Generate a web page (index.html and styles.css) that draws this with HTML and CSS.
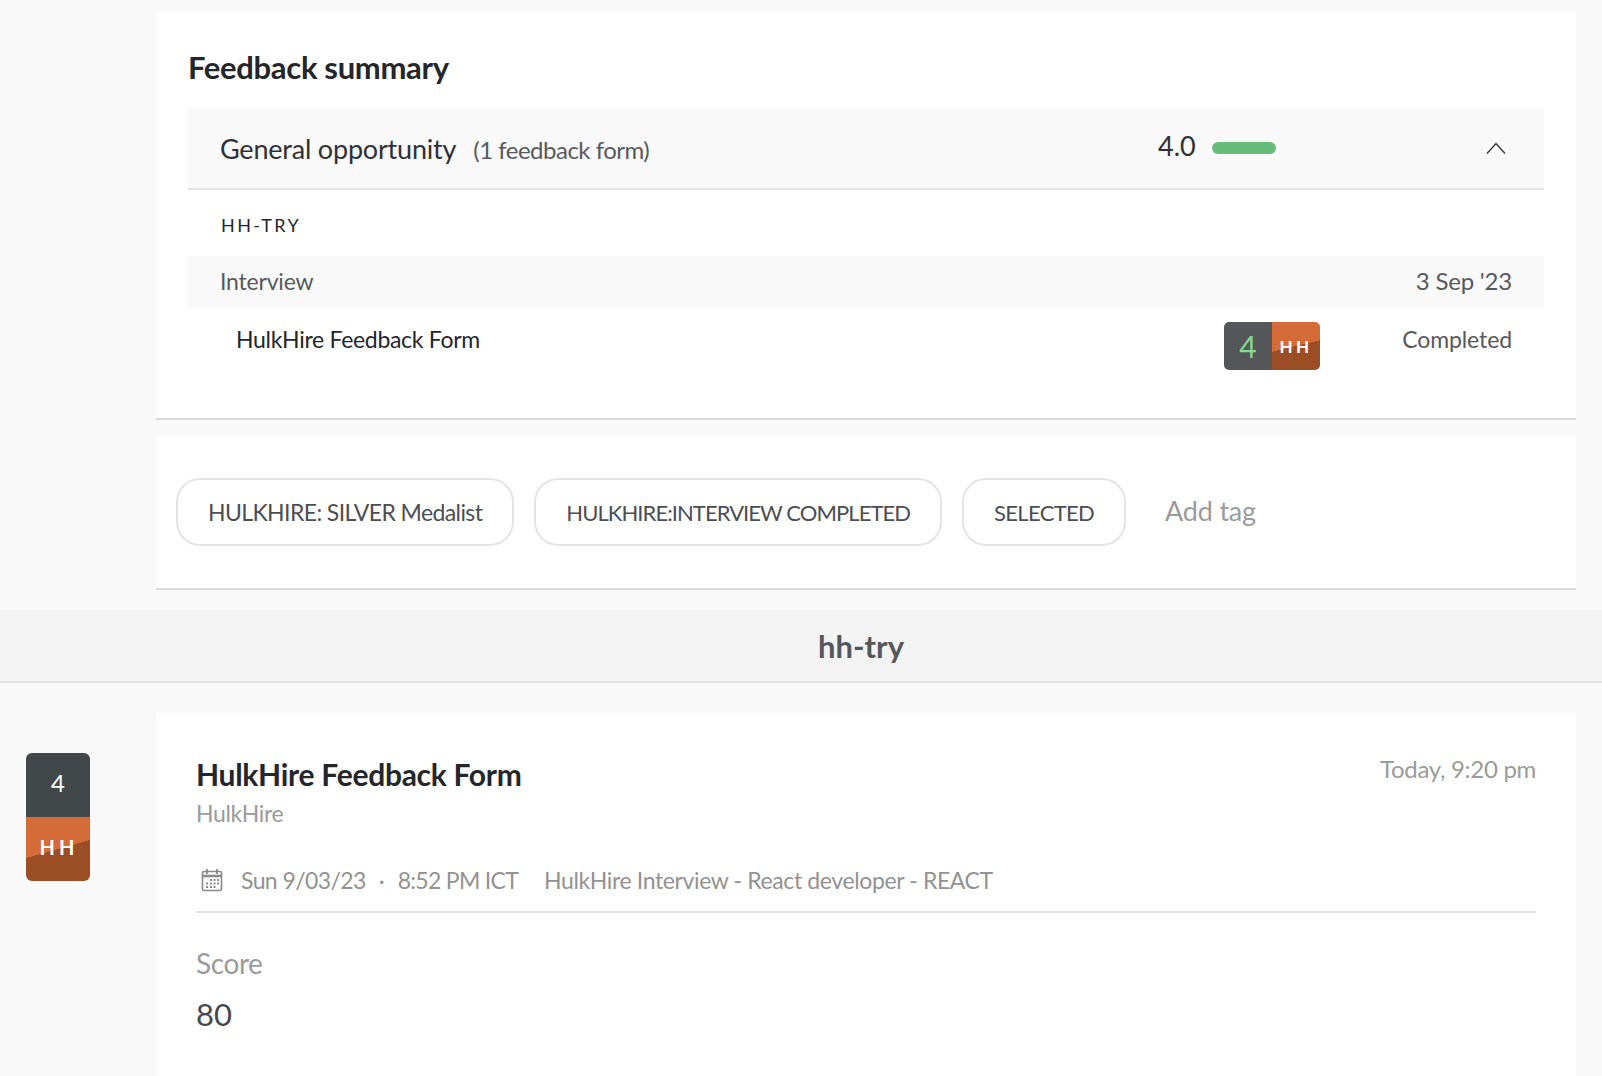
FILE: index.html
```html
<!DOCTYPE html>
<html lang="en">
<head>
<meta charset="utf-8">
<title>Feedback summary</title>
<link rel="stylesheet" href="styles.css">
</head>
<body>
<div class="top">
  <section class="card summary">
    <h2 class="summary-title">Feedback summary</h2>
    <div class="group-head">
      <div class="group-name">General opportunity<span class="group-count">(1 feedback form)</span></div>
      <div class="group-score">4.0</div>
      <div class="bar"></div>
      <svg class="chevron" width="20" height="12" viewBox="0 0 20 12"><path d="M1 11.5 10 1.5 19 11.5" fill="none" stroke="#333" stroke-width="1.3"/></svg>
    </div>
    <div class="posting">HH-TRY</div>
    <div class="stage"><span class="stage-name">Interview</span><span class="stage-date">3 Sep '23</span></div>
    <div class="form-row">
      <span class="form-name">HulkHire Feedback Form</span>
      <div class="badge">
        <span class="badge-score">4</span>
        <span class="badge-who">HH</span>
      </div>
      <span class="form-status">Completed</span>
    </div>
  </section>
  <section class="card tags">
    <span class="tag">HULKHIRE: SILVER Medalist</span>
    <span class="tag tag-caps">HULKHIRE:INTERVIEW COMPLETED</span>
    <span class="tag tag-short">SELECTED</span>
    <span class="add-tag">Add tag</span>
  </section>
</div>
<div class="band"><span>hh-try</span></div>
<div class="feed">
  <div class="side-badge">
    <span class="side-score">4</span>
    <span class="side-who">HH</span>
  </div>
  <section class="card detail">
    <div class="detail-head">
      <div>
        <h3 class="detail-title">HulkHire Feedback Form</h3>
        <div class="detail-author">HulkHire</div>
      </div>
      <div class="detail-time">Today, 9:20 pm</div>
    </div>
    <div class="meta">
      <svg class="cal" width="22" height="24" viewBox="0 0 22 24" fill="none">
        <rect x="1.500" y="3.500" width="19" height="19" rx="1.500" stroke="#8a8a8a" stroke-width="1.600"/>
        <path d="M1.500 8h19" stroke="#8a8a8a" stroke-width="2.600"/>
        <path d="M6 1v5M16 1v5" stroke="#8a8a8a" stroke-width="1.800"/>
        <path d="M9 11h2v2H9zM12.500 11h2v2h-2zM16 11h2v2h-2zM5 14.500h2v2H5zM9 14.500h2v2H9zM12.500 14.500h2v2h-2zM16 14.500h2v2h-2zM5 18h2v2H5zM9 18h2v2H9zM12.500 18h2v2h-2z" fill="#8a8a8a"/>
      </svg>
      <span class="meta-date">Sun 9/03/23</span>
      <span class="meta-dot">·</span>
      <span class="meta-clock">8:52 PM ICT</span>
      <span class="meta-name">HulkHire Interview - React developer - REACT</span>
    </div>
    <div class="score-label">Score</div>
    <div class="score-value">80</div>
  </section>
</div>
</body>
</html>
```
FILE: styles.css
```css
* { box-sizing: border-box; }
html, body { margin: 0; padding: 0; }
body {
  width: 1602px;
  height: 1076px;
  overflow: hidden;
  background: #f9f9f9;
  font-family: "Lato", "Noto Sans", sans-serif;
  color: #333;
}
.card { background: #fff; }
.top {
  margin-left: 156px;
  width: 1420px;
  padding-top: 12px;
  display: flex;
  flex-direction: column;
  gap: 16px;
}
.summary {
  height: 408px;
  padding: 33px 32px 0 32px;
  border-bottom: 2px solid #d9d9d9;
}
.summary-title {
  margin: 0;
  height: 63px;
  font-size: 31px;
  line-height: 44px;
  font-weight: 700;
  letter-spacing: -0.32px;
  color: #24262a;
}
.group-head {
  height: 82px;
  background: #f9f9f9;
  border-bottom: 2px solid #e2e2e2;
  display: flex;
  align-items: center;
  padding: 0 38px 0 32px;
}
.group-name { font-size: 27px; letter-spacing: -0.2px; color: #2f3136; width: 938px; }
.group-count { font-size: 24px; letter-spacing: -0.5px; color: #57595d; margin-left: 17px; }
.group-score { font-size: 27px; color: #2f3136; width: 54px; margin-top: -6px; }
.bar { width: 64px; height: 12px; border-radius: 6px; background: #66bd7b; }
.chevron { margin-left: auto; }
.posting {
  height: 66px;
  padding: 24px 0 0 33px;
  font-size: 18px;
  line-height: 22px;
  letter-spacing: 2.4px;
  color: #24262a;
}
.stage {
  height: 52px;
  background: #f9f9f9;
  display: flex;
  align-items: center;
  justify-content: space-between;
  padding: 0 32px 3px;
  color: #57595d;
}
.stage-name { font-size: 23px; letter-spacing: -0.2px; }
.stage-date { font-size: 24px; letter-spacing: -0.2px; }
.form-row {
  display: flex;
  align-items: flex-start;
  padding: 14px 32px 0 48px;
}
.form-name { font-size: 23px; letter-spacing: -0.3px; line-height: 34px; color: #24262a; width: 988px; }
.badge {
  width: 96px;
  height: 48px;
  border-radius: 5px;
  overflow: hidden;
  display: flex;
}
.badge-score {
  width: 48px;
  background: #54565a;
  color: #86d68c;
  font-size: 30px;
  line-height: 48px;
  text-align: center;
}
.badge-who {
  width: 48px;
  background: linear-gradient(166.500deg, #d56b36 50%, #9b4e26 50%);
  color: #fff;
  font-size: 17px;
  font-weight: 700;
  letter-spacing: 3.5px;
  line-height: 50px;
  text-align: center;
}
.form-status {
  margin-left: auto;
  font-size: 23px;
  letter-spacing: -0.1px;
  line-height: 34px;
  color: #57595d;
}
.tags {
  height: 154px;
  border-bottom: 2px solid #d9d9d9;
  display: flex;
  align-items: flex-start;
  gap: 20px;
  padding: 42px 0 0 20px;
}
.tag {
  height: 68px;
  padding: 0 30px;
  border: 2px solid #e4e4e4;
  border-radius: 24px;
  display: flex;
  align-items: center;
  font-size: 23px;
  letter-spacing: -0.6px;
  color: #4c4e52;
  white-space: nowrap;
}
.tag-caps { font-size: 22px; letter-spacing: -0.93px; }
.tag-short { font-size: 22px; letter-spacing: -0.68px; }
.add-tag {
  margin-left: 19px;
  font-size: 27px;
  letter-spacing: -0.2px;
  line-height: 66px;
  color: #9b9b9b;
}
.band {
  margin-top: 20px;
  height: 73px;
  background: #f3f3f3;
  border-bottom: 2px solid #e2e2e2;
  padding-left: 120px;
  display: flex;
  align-items: center;
  justify-content: center;
  font-size: 31px;
  font-weight: 700;
  color: #55575b;
}
.feed {
  display: flex;
  align-items: flex-start;
  padding: 30px 26px 0 26px;
}
.side-badge {
  width: 64px;
  height: 128px;
  margin: 40px 66px 0 0;
  border-radius: 6px;
  overflow: hidden;
  display: flex;
  flex-direction: column;
  color: #fff;
  flex: none;
}
.side-score {
  height: 64px;
  background: #42484a;
  text-align: center;
  font-size: 24px;
  line-height: 60px;
}
.side-who {
  height: 64px;
  padding-left: 2px;
  background: linear-gradient(164deg, #d56b36 50%, #9b4e26 50%);
  text-align: center;
  font-size: 20px;
  font-weight: 700;
  letter-spacing: 4px;
  line-height: 60px;
}
.detail {
  width: 1420px;
  height: 370px;
  padding: 39px 40px 0 40px;
}
.detail-head { display: flex; justify-content: space-between; align-items: flex-start; }
.detail-title {
  margin: 0;
  font-size: 30px;
  letter-spacing: -0.28px;
  line-height: 44px;
  font-weight: 700;
  color: #24262a;
}
.detail-author { font-size: 23px; letter-spacing: -0.38px; line-height: 34px; color: #9b9b9b; }
.detail-time { font-size: 24px; letter-spacing: -0.3px; line-height: 34px; color: #9b9b9b; }
.meta {
  margin-top: 21px;
  height: 62px;
  padding: 0 0 2px 5px;
  border-bottom: 2px solid #e2e2e2;
  display: flex;
  align-items: center;
  font-size: 23px;
  color: #929292;
}
.cal { margin-right: 18px; flex: none; }
.meta-date { letter-spacing: -0.6px; }
.meta-dot { margin: 0 13px; }
.meta-clock { letter-spacing: -0.7px; }
.meta-name { margin-left: 26px; letter-spacing: -0.38px; }
.score-label { margin-top: 30px; font-size: 28px; letter-spacing: -0.4px; line-height: 40px; color: #9b9b9b; }
.score-value { margin-top: 11px; font-size: 31px; line-height: 40px; color: #46484c; }
```
